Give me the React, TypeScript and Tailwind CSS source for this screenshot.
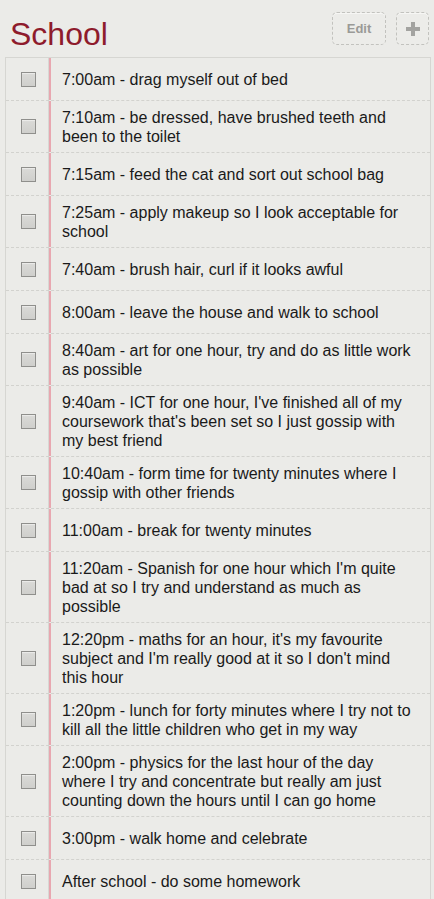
const items = [
  "7:00am - drag myself out of bed",
  "7:10am - be dressed, have brushed teeth and been to the toilet",
  "7:15am - feed the cat and sort out school bag",
  "7:25am - apply makeup so I look acceptable for school",
  "7:40am - brush hair, curl if it looks awful",
  "8:00am - leave the house and walk to school",
  "8:40am - art for one hour, try and do as little work as possible",
  "9:40am - ICT for one hour, I've finished all of my coursework that's been set so I just gossip with my best friend",
  "10:40am - form time for twenty minutes where I gossip with other friends",
  "11:00am - break for twenty minutes",
  "11:20am - Spanish for one hour which I'm quite bad at so I try and understand as much as possible",
  "12:20pm - maths for an hour, it's my favourite subject and I'm really good at it so I don't mind this hour",
  "1:20pm - lunch for forty minutes where I try not to kill all the little children who get in my way",
  "2:00pm - physics for the last hour of the day where I try and concentrate but really am just counting down the hours until I can go home",
  "3:00pm - walk home and celebrate",
  "After school - do some homework",
];

export default function App() {
  return (
    <div className="h-[899px] overflow-hidden bg-[#ebebe8] font-['Liberation_Sans',Arial,sans-serif]">
      {/* Header */}
      <div className="flex h-[57px] items-start justify-between pl-[10px] pr-[5px]">
        <h1 className="mt-[15px] text-[32px] leading-[38px] text-[#8e1b2c]">School</h1>
        <div className="mt-[12px] flex gap-[10px]">
          <button className="h-[33px] w-[54px] rounded-[5px] border border-dashed border-[#c2c2be] bg-[#ecece9] text-[13px] font-bold text-[#9a9a97] shadow-[inset_0_1px_0_#f6f6f4]">
            Edit
          </button>
          <button className="flex h-[33px] w-[33px] items-center justify-center rounded-[5px] border border-dashed border-[#c2c2be] bg-[#ecece9] shadow-[inset_0_1px_0_#f6f6f4]">
            <svg width="14" height="14" viewBox="0 0 14 14">
              <path d="M5 0h4v5h5v4H9v5H5V9H0V5h5z" fill="#a3a3a0" />
            </svg>
          </button>
        </div>
      </div>

      {/* List */}
      <div className="ml-[5px] mr-[3px] border-l border-r border-t border-[#d6d6d2]">
        {items.map((text) => (
          <div
            key={text}
            className="flex min-h-[43px] border-b border-dashed border-[#d2d2ce]"
          >
            <div className="flex w-[43px] shrink-0 items-center justify-center border-r border-[#d8d8d4]">
              <span className="ml-[2px] block h-[15px] w-[15px] border border-[#8f8f8c] bg-gradient-to-b from-[#dadad7] to-[#cfcfcc] shadow-[inset_0_1px_1px_#ffffff80]" />
            </div>
            <div className="w-[2px] shrink-0 bg-[#e8a7b0]" />
            <div className="flex flex-1 items-center pt-[7px] pb-[6px] pl-[11px] pr-[12px] text-[16px] leading-[19px] text-[#1a1a1a]">
              {text}
            </div>
          </div>
        ))}
      </div>
    </div>
  );
}
